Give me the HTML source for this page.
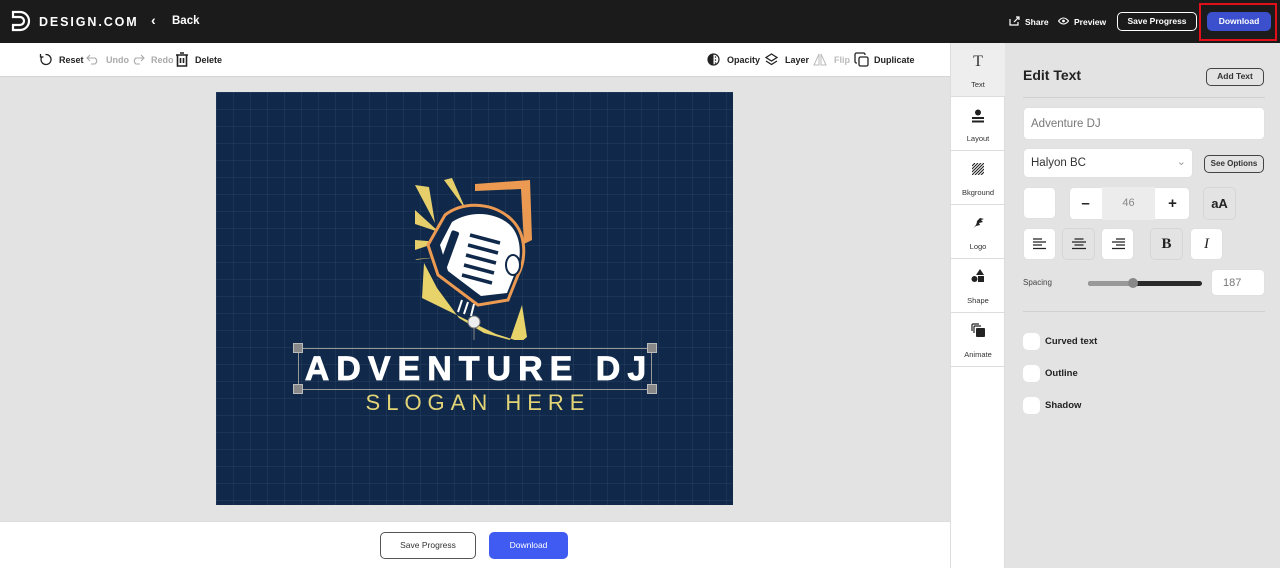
<!DOCTYPE html>
<html><head><meta charset="utf-8"><style>
*{box-sizing:border-box;margin:0;padding:0}
body{width:1280px;height:568px;overflow:hidden;font-family:"Liberation Sans",sans-serif;background:#e3e3e3;position:relative;color:#222}
.abs{position:absolute}
.hdr{left:0;top:0;width:1280px;height:43px;background:#1b1b1b;color:#fff}
.tb{left:0;top:43px;width:950px;height:34px;background:#fff;border-bottom:1px solid #d5d5d5;font-size:9px;font-weight:bold}
.tb span{position:absolute;top:12px}
.btn{position:absolute;border-radius:5px;font-weight:bold;text-align:center}
.tabs{left:950px;top:43px;width:55px;height:525px;background:#fff;border-left:1px solid #ddd;border-right:1px solid #ddd}
.tab{position:absolute;left:0;width:54px;height:54px;border-bottom:1px solid #ddd;font-size:7.5px;text-align:center;color:#333}
.tab .l{position:absolute;left:0;right:0;top:37px}
.box{position:absolute;background:#fff;border-radius:5px;border:1px solid #e0e0e0}
.chk{position:absolute;left:1023px;width:17px;height:17px;background:#fff;border-radius:5px}
.cl{position:absolute;left:1045px;font-size:9.5px;font-weight:bold}
</style></head><body>
<div class="abs hdr">
 <svg class="abs" style="left:11px;top:10px" width="20" height="22" viewBox="0 0 20 22"><path d="M2 2h7a9 9 0 0 1 0 18H2v-5h7a4 4 0 0 0 0-8H2z" fill="none" stroke="#fff" stroke-width="2.2"/></svg>
 <div class="abs" style="left:39px;top:15px;font-size:12.5px;font-weight:bold;letter-spacing:1.9px">DESIGN.COM</div>
 <div class="abs" style="left:151px;top:12px;font-size:14px;font-weight:bold">‹</div>
 <div class="abs" style="left:172px;top:15px;font-size:11.5px;font-weight:bold">Back</div>
 <svg class="abs" style="left:1009px;top:16px" width="11" height="10" viewBox="0 0 11 10"><path d="M1 3v6h8V6M5 6l5-5M7 1h3v3" fill="none" stroke="#fff" stroke-width="1.2"/></svg>
 <div class="abs" style="left:1025px;top:17px;font-size:8.5px;font-weight:bold">Share</div>
 <svg class="abs" style="left:1058px;top:17px" width="11" height="8" viewBox="0 0 11 8"><path d="M0.5 4Q5.5-2 10.5 4Q5.5 10 0.5 4z" fill="none" stroke="#fff" stroke-width="1.1"/><circle cx="5.5" cy="4" r="1.4" fill="#fff"/></svg>
 <div class="abs" style="left:1074px;top:17px;font-size:8.5px;font-weight:bold">Preview</div>
 <div class="btn" style="left:1117px;top:12px;width:80px;height:19px;border:1.5px solid #fff;font-size:8.5px;line-height:16px">Save Progress</div>
 <div class="btn" style="left:1207px;top:12px;width:64px;height:19px;background:#3c4fcc;font-size:8.5px;line-height:19px">Download</div>
 <div class="abs" style="left:1199px;top:3px;width:78px;height:38px;border:2px solid #e0101a"></div>
</div>
<div class="abs tb">
 <svg class="abs" style="left:39px;top:10px" width="13" height="13" viewBox="0 0 13 13"><path d="M3 3.5A5 5 0 1 0 6.5 1.5M1.5 1v3h3" fill="none" stroke="#222" stroke-width="1.3"/></svg>
 <span style="left:59px;color:#222">Reset</span>
 <svg class="abs" style="left:86px;top:11px" width="14" height="11" viewBox="0 0 14 11"><path d="M4 1L1 4l3 3M1 4h8a3.5 3.5 0 0 1 0 6H5" fill="none" stroke="#aaa" stroke-width="1.1"/></svg>
 <span style="left:106px;color:#aaa">Undo</span>
 <svg class="abs" style="left:131px;top:11px" width="14" height="11" viewBox="0 0 14 11"><path d="M10 1l3 3-3 3M13 4H5a3.5 3.5 0 0 0 0 6h4" fill="none" stroke="#aaa" stroke-width="1.1"/></svg>
 <span style="left:151px;color:#aaa">Redo</span>
 <svg class="abs" style="left:175px;top:9px" width="14" height="15" viewBox="0 0 14 15"><path d="M1 3h12M5 1h4M2.5 3v11h9V3M5.5 6v5M8.5 6v5" fill="none" stroke="#222" stroke-width="1.6"/></svg>
 <span style="left:195px">Delete</span>
 <svg class="abs" style="left:707px;top:10px" width="13" height="13" viewBox="0 0 13 13"><circle cx="6.5" cy="6.5" r="5.5" fill="none" stroke="#222" stroke-width="1.2"/><path d="M6.5 1A5.5 5.5 0 0 0 6.5 12z" fill="#222"/><circle cx="8.5" cy="4" r=".8" fill="#222"/><circle cx="8.5" cy="7" r=".8" fill="#222"/><circle cx="8.5" cy="10" r=".8" fill="#222"/></svg>
 <span style="left:727px">Opacity</span>
 <svg class="abs" style="left:765px;top:10px" width="13" height="13" viewBox="0 0 13 13"><path d="M6.5 1l5.5 3.5-5.5 3.5L1 4.5zM1 8l5.5 3.5L12 8" fill="none" stroke="#222" stroke-width="1.3"/></svg>
 <span style="left:785px">Layer</span>
 <svg class="abs" style="left:813px;top:10px" width="14" height="13" viewBox="0 0 14 13"><path d="M6 1L1 12h5zM8 1l5 11H8z" fill="none" stroke="#bbb" stroke-width="1"/></svg>
 <span style="left:834px;color:#bbb">Flip</span>
 <svg class="abs" style="left:854px;top:9px" width="15" height="15" viewBox="0 0 15 15"><rect x="5" y="5" width="9" height="9" rx="1.5" fill="none" stroke="#222" stroke-width="1.3"/><path d="M3 11H2.5A1.5 1.5 0 0 1 1 9.5v-7A1.5 1.5 0 0 1 2.5 1h7A1.5 1.5 0 0 1 11 2.5V3" fill="none" stroke="#222" stroke-width="1.3"/></svg>
 <span style="left:874px">Duplicate</span>
</div>
<div class="abs" style="left:216px;top:92px;width:517px;height:413px;background:#10294a;background-image:linear-gradient(rgba(255,255,255,.05) 1px,transparent 1px),linear-gradient(90deg,rgba(255,255,255,.05) 1px,transparent 1px);background-size:17px 17px"></div>
<svg class="abs" style="left:400px;top:170px" width="140" height="170" viewBox="0 0 140 170">
 <path d="M15 15l14 2 6 36zM44 10l8-2 14 32zM15 40l24 22-24-8zM15 70l24 2-24 8zM15 90l24-3-22 2z" fill="#e6cf6a"/>
 <path d="M75 14l55-4 2 60-8 4-3-55-46 2z" fill="#ec9a52"/>
 <path d="M22 128l2-35 13 25 22 30 25 15 26 7 12-35 5 32-6 5-25-8-25-12z" fill="#e8d36a"/>
 <path d="M45 45c20-15 50-12 67 5 15 15 14 40 6 55l-10 25-30 5-40-30-10-30z" fill="#10294a" stroke="#ec9a52" stroke-width="3"/>
 <path d="M52 52c18-12 44-10 58 3 12 12 12 33 5 48l-8 20-26 3-33-25-8-26z" fill="#fff"/>
 <path d="M70 65l30 8M68 75l30 8M66 85l30 8M64 95l30 8M62 105l30 8" stroke="#10294a" stroke-width="3.5"/>
 <rect x="45" y="60" width="8" height="40" rx="2" fill="#10294a" transform="rotate(20 49 80)"/>
 <ellipse cx="113" cy="95" rx="7" ry="10" fill="#fff" stroke="#10294a" stroke-width="2"/>
 <path d="M62 130l-4 12M68 132l-4 12M74 134l-3 12" stroke="#fff" stroke-width="2"/>
 <circle cx="74" cy="152" r="6" fill="#eee" stroke="#777"/>
 <path d="M74 158v20" stroke="#888"/>
</svg>
<div class="abs" style="left:298px;top:348px;width:354px;height:42px;border:1.5px solid #999"></div>
<div class="abs" style="left:293px;top:343px;width:10px;height:10px;background:#888;border:1px solid #bbb"></div>
<div class="abs" style="left:647px;top:343px;width:10px;height:10px;background:#888;border:1px solid #bbb"></div>
<div class="abs" style="left:293px;top:384px;width:10px;height:10px;background:#888;border:1px solid #bbb"></div>
<div class="abs" style="left:647px;top:384px;width:10px;height:10px;background:#888;border:1px solid #bbb"></div>
<div class="abs" style="left:298px;top:350px;width:362px;text-align:center;color:#fff;font-size:34px;font-weight:bold;letter-spacing:7px;line-height:38px;-webkit-text-stroke:0.8px #fff">ADVENTURE DJ</div>
<div class="abs" style="left:298px;top:391px;width:360px;text-align:center;color:#e3d577;font-size:22px;letter-spacing:6px;line-height:24px">SLOGAN HERE</div>
<div class="abs" style="left:0;top:521px;width:950px;height:47px;background:#fff;border-top:1px solid #ddd"></div>
<div class="btn" style="left:380px;top:532px;width:96px;height:27px;border:1.5px solid #555;background:#fff;font-size:8.5px;font-weight:normal;line-height:24px;color:#333">Save Progress</div>
<div class="btn" style="left:489px;top:532px;width:79px;height:27px;background:#3f5bf2;color:#fff;font-size:8.5px;font-weight:normal;line-height:27px">Download</div>
<div class="abs tabs">
 <div class="tab" style="top:0;background:#eee"><div class="abs" style="left:0;right:0;top:10px;font-size:16px;font-family:'Liberation Serif',serif">T</div><div class="l">Text</div></div>
 <div class="tab" style="top:54px"><svg class="abs" style="left:21px;top:12px" width="12" height="14" viewBox="0 0 12 14"><circle cx="6" cy="3.5" r="3" fill="#222"/><rect x="0" y="8" width="12" height="2" fill="#222"/><rect x="0" y="11.5" width="12" height="2" fill="#222"/></svg><div class="l">Layout</div></div>
 <div class="tab" style="top:108px"><svg class="abs" style="left:21px;top:12px" width="12" height="12" viewBox="0 0 12 12"><path d="M0 3L3 0M0 6L6 0M0 9L9 0M0 12L12 0M3 12L12 3M6 12L12 6M9 12L12 9" stroke="#222" stroke-width="1.1"/></svg><div class="l">Bkground</div></div>
 <div class="tab" style="top:162px"><svg class="abs" style="left:20px;top:12px" width="14" height="12" viewBox="0 0 14 12"><path d="M1 12c3-2 5-5 5-8l3-3 4 1-3 1 2 2-4 1 1 2-4 1z" fill="#222"/></svg><div class="l">Logo</div></div>
 <div class="tab" style="top:216px"><svg class="abs" style="left:20px;top:10px" width="14" height="14" viewBox="0 0 14 14"><path d="M9 0l4 6H5z" fill="#222"/><circle cx="3.5" cy="10" r="3" fill="#222"/><rect x="7" y="7" width="6" height="6" fill="#222"/></svg><div class="l">Shape</div></div>
 <div class="tab" style="top:270px"><svg class="abs" style="left:20px;top:10px" width="14" height="14" viewBox="0 0 14 14"><rect x="5" y="5" width="9" height="9" rx="1" fill="#222"/><path d="M3 10V4a1 1 0 0 1 1-1h6M1 8V2a1 1 0 0 1 1-1h6" fill="none" stroke="#222" stroke-width="1.2"/></svg><div class="l">Animate</div></div>
</div>
<div class="abs" style="left:1023px;top:67px;font-size:14px;font-weight:bold">Edit Text</div>
<div class="btn" style="left:1206px;top:68px;width:58px;height:18px;border:1.5px solid #444;font-size:8.5px;line-height:15px;color:#333">Add Text</div>
<div class="abs" style="left:1023px;top:97px;width:242px;height:1px;background:#d0d0d0"></div>
<div class="box" style="left:1023px;top:107px;width:242px;height:33px;font-size:11.5px;color:#777;padding:10px 7px">Adventure DJ</div>
<div class="box" style="left:1023px;top:148px;width:170px;height:30px;font-size:11.5px;color:#333;padding:8px 7px">Halyon BC<span style="position:absolute;right:6px;top:6px;color:#999;font-size:11px">⌄</span></div>
<div class="btn" style="left:1204px;top:155px;width:60px;height:18px;border:1.5px solid #444;font-size:8px;line-height:15px;color:#333">See Options</div>
<div class="box" style="left:1023px;top:187px;width:33px;height:32px"></div>
<div class="box" style="left:1069px;top:187px;width:121px;height:33px"></div>
<div class="abs" style="left:1102px;top:187px;width:53px;height:33px;background:#ececec;font-size:11px;color:#888;text-align:center;line-height:33px">46</div>
<div class="abs" style="left:1069px;top:187px;width:33px;height:33px;text-align:center;line-height:33px;font-size:15px;font-weight:bold">–</div>
<div class="abs" style="left:1156px;top:187px;width:33px;height:33px;text-align:center;line-height:33px;font-size:15px;font-weight:bold">+</div>
<div class="box" style="left:1203px;top:187px;width:33px;height:33px;background:#e3e3e3;border-color:#d6d6d6;text-align:center;line-height:31px;font-size:13px;font-weight:bold">aA</div>
<div class="box" style="left:1023px;top:228px;width:33px;height:32px"></div>
<div class="box" style="left:1062px;top:228px;width:33px;height:32px;background:#e3e3e3;border-color:#d6d6d6"></div>
<div class="box" style="left:1101px;top:228px;width:33px;height:32px"></div>
<div class="box" style="left:1150px;top:228px;width:33px;height:32px;background:#e3e3e3;border-color:#d6d6d6;text-align:center;line-height:30px;font-size:15px;font-weight:bold;font-family:'Liberation Serif',serif">B</div>
<div class="box" style="left:1190px;top:228px;width:33px;height:32px;text-align:center;line-height:30px;font-size:15px;font-style:italic;font-family:'Liberation Serif',serif">I</div>
<svg class="abs" style="left:1033px;top:238px" width="14" height="12" viewBox="0 0 14 12"><path d="M0 1h9M0 4h13M0 7h9M0 10.5h13" stroke="#222" stroke-width="1.2"/></svg>
<svg class="abs" style="left:1072px;top:238px" width="14" height="12" viewBox="0 0 14 12"><path d="M2.5 1h9M0 4h14M2.5 7h9M0 10.5h14" stroke="#222" stroke-width="1.2"/></svg>
<svg class="abs" style="left:1111px;top:238px" width="14" height="12" viewBox="0 0 14 12"><path d="M5 1h9M1 4h13M5 7h9M1 10.5h13" stroke="#222" stroke-width="1.2"/></svg>
<div class="abs" style="left:1023px;top:278px;font-size:8px;color:#444">Spacing</div>
<div class="abs" style="left:1088px;top:281px;width:114px;height:5px;border-radius:3px;background:#2a2a2a"></div>
<div class="abs" style="left:1088px;top:281px;width:45px;height:5px;border-radius:3px;background:#999"></div>
<div class="abs" style="left:1128px;top:278px;width:10px;height:10px;border-radius:50%;background:#888"></div>
<div class="box" style="left:1211px;top:269px;width:54px;height:27px;font-size:11px;color:#777;padding:7px 11px">187</div>
<div class="abs" style="left:1023px;top:311px;width:242px;height:1px;background:#d0d0d0"></div>
<div class="chk" style="top:333px"></div><div class="cl" style="top:336px">Curved text</div>
<div class="chk" style="top:365px"></div><div class="cl" style="top:368px">Outline</div>
<div class="chk" style="top:397px"></div><div class="cl" style="top:400px">Shadow</div>
</body></html>
